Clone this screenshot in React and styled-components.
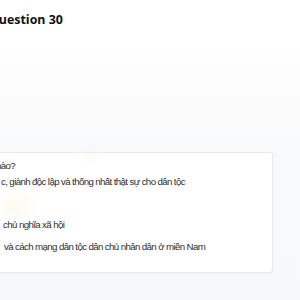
import React from "react";
import styled, { createGlobalStyle } from "styled-components";

const Global = createGlobalStyle`
  html, body { margin: 0; padding: 0; }
  body {
    width: 300px;
    height: 300px;
    overflow: hidden;
    background: #fff;
    font-family: "Liberation Sans", Arial, sans-serif;
  }
`;

const Page = styled.div`
  width: 300px;
  height: 300px;
  overflow: hidden;
  background: linear-gradient(180deg, #ffffff 0px, #ffffff 40px, #fcfcfd 90px, #f8f9fa 160px, #f7f8fa 300px);
  display: flex;
  flex-direction: column;
`;

const Title = styled.h1`
  margin: 0;
  padding: 11px 0 0 0;
  margin-left: -11px;
  font-family: "Open Sans", "Noto Sans", sans-serif;
  font-weight: 700;
  font-size: 12.4px;
  line-height: 17px;
  color: #111;
  white-space: nowrap;
`;

const Card = styled.section`
  position: relative;
  margin-top: 124px;
  margin-left: -20px;
  width: 293px;
  height: 121px;
  box-sizing: border-box;
  background: #fff;
  border: 1px solid #e9eaec;
  border-radius: 3px;
  box-shadow: 0 1px 3px rgba(0, 0, 0, 0.04);
  padding-top: 5px;
  display: flex;
  flex-direction: column;
`;

const Glow = styled.div`
  position: absolute;
  left: ${(p) => p.x}px;
  top: ${(p) => p.y}px;
  width: ${(p) => p.w}px;
  height: ${(p) => p.h}px;
  border-radius: 40%;
  background: radial-gradient(ellipse at center, rgba(250, 238, 200, 0.3) 0%, rgba(250, 238, 200, 0) 75%);
  pointer-events: none;
`;

const Line = styled.div`
  font-size: 9.7px;
  letter-spacing: -0.62px;
  line-height: 14px;
  color: #2e2e2e;
  white-space: nowrap;
  padding-left: ${(p) => 20 + p.shift}px;
  margin-top: ${(p) => p.gap}px;
  height: 14px;
`;

export default function App() {
  return (
    <>
      <Global />
      <Page>
        <Title>Question 30</Title>
        <Card>
          <Glow x={14} y={34} w={44} h={38} />
          <Glow x={96} y={-3} w={26} h={14} />
          <Line shift={-5} gap={1}>nào?</Line>
          <Line shift={0} gap={2}>c, giành độc lập và thống nhất thật sự cho dân tộc</Line>
          <Line shift={0} gap={29}>&nbsp;chủ nghĩa xã hội</Line>
          <Line shift={3} gap={8}>và cách mạng dân tộc dân chủ nhân dân ở miền Nam</Line>
        </Card>
      </Page>
    </>
  );
}
